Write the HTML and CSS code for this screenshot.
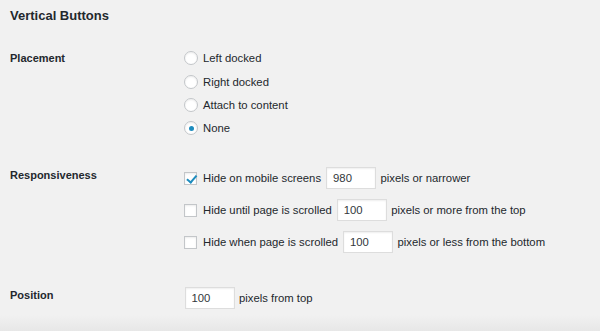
FILE: index.html
```html
<!DOCTYPE html>
<html lang="en">

<head>
  <meta charset="UTF-8">
  <meta name="viewport" content="width=device-width, initial-scale=1.0">
  <title>Vertical Buttons</title>
  <link rel="stylesheet" href="styles.css">
</head>

<body>
  <div class="wrap">
    <h2 class="title">Vertical Buttons</h2>

    <!-- placement -->
    <div class="row placement">
      <div class="label label-radio">Placement</div>
      <div class="field">
        <label class="opt radio-opt"><input type="radio" name="place" class="radio"> Left docked</label>
        <label class="opt radio-opt"><input type="radio" name="place" class="radio"> Right docked</label>
        <label class="opt radio-opt"><input type="radio" name="place" class="radio"> Attach to content</label>
        <label class="opt radio-opt"><input type="radio" name="place" class="radio" checked> None</label>
      </div>
    </div>

    <!-- responsiveness -->
    <div class="row responsive">
      <div class="label">Responsiveness</div>
      <div class="field">
        <div class="opt line-opt">
          <input type="checkbox" class="check" checked>
          <span>Hide on mobile screens</span>
          <input type="text" class="num" value="980">
          <span>pixels or narrower</span>
        </div>
        <div class="opt line-opt">
          <input type="checkbox" class="check">
          <span>Hide until page is scrolled</span>
          <input type="text" class="num" value="100">
          <span>pixels or more from the top</span>
        </div>
        <div class="opt line-opt">
          <input type="checkbox" class="check">
          <span>Hide when page is scrolled</span>
          <input type="text" class="num" value="100">
          <span>pixels or less from the bottom</span>
        </div>
      </div>
    </div>

    <!-- position -->
    <div class="row position">
      <div class="label">Position</div>
      <div class="field">
        <div class="opt line-opt">
          <input type="text" class="num" value="100">
          <span>pixels from top</span>
        </div>
      </div>
    </div>
  </div>
</body>

</html>
```

FILE: styles.css
```css
html,
body {
  height: 100%;
}

body {
  margin: 0;
  background: linear-gradient(to bottom, #f1f1f1 calc(100% - 16px), #e7e7e7);
  color: #23282d;
  font-family: "Liberation Sans", Arial, sans-serif;
  overflow: hidden;
}

.wrap {
  padding: 8px 0 0 10px;
}

.title {
  margin: 0;
  font-size: 13px;
  line-height: 16px;
  font-weight: bold;
}

.row {
  display: flex;
}

.placement {
  margin-top: 22.85px;
}

.responsive {
  margin-top: 22.45px;
}

.position {
  margin-top: 23.5px;
}

.label {
  width: 174px;
  flex-shrink: 0;
  font-size: 11px;
  font-weight: bold;
  line-height: 26.4px;
}

.label-radio {
  line-height: 23.3px;
}

.field {
  display: flex;
  flex-direction: column;
}

.opt {
  display: flex;
  align-items: center;
  font-size: 11.3px;
  white-space: nowrap;
}

.radio-opt {
  height: 23.3px;
}

.line-opt {
  height: 32px;
  gap: 4.5px;
}

.radio,
.check {
  appearance: none;
  -webkit-appearance: none;
  box-sizing: border-box;
  width: 14px;
  height: 14px;
  margin: 0;
  background: #fff;
  border: 1px solid #c3c6c9;
  box-shadow: inset 0 1px 2px rgba(0, 0, 0, 0.08);
  position: relative;
  flex-shrink: 0;
}

.radio {
  border-radius: 50%;
  margin-right: 5px;
}

.radio:checked::before {
  content: "";
  position: absolute;
  width: 5px;
  height: 5px;
  left: 3.5px;
  top: 3.5px;
  border-radius: 50%;
  background: #1e8cbe;
}

.check {
  width: 13px;
  height: 13px;
  margin-right: 1.5px;
}

.check:checked::before {
  content: "";
  position: absolute;
  left: 3.5px;
  top: 0;
  width: 3.5px;
  height: 7.5px;
  border-right: 2px solid #1e8cbe;
  border-bottom: 2px solid #1e8cbe;
  transform: rotate(40deg);
}

.num {
  box-sizing: border-box;
  width: 50px;
  height: 22px;
  margin: 0 0 0 0.5px;
  padding: 0 6px;
  border: 1px solid #dddddd;
  background: #fff;
  box-shadow: inset 0 1px 2px rgba(0, 0, 0, 0.07);
  font-family: "Liberation Sans", Arial, sans-serif;
  font-size: 11.3px;
  color: #32373c;
  outline: none;
}
```
